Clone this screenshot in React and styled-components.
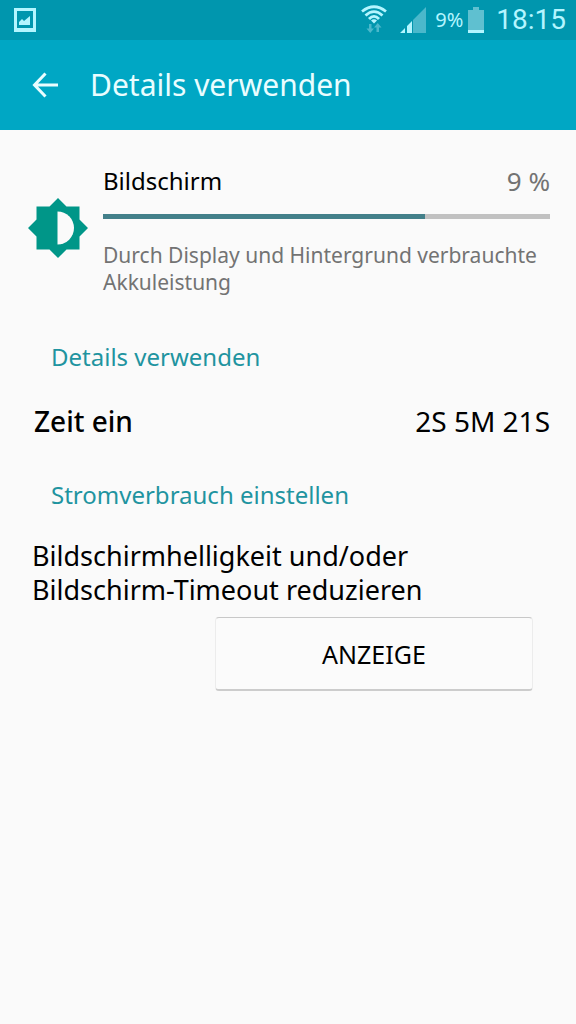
import React from 'react';
import styled, { createGlobalStyle } from 'styled-components';

const GlobalStyle = createGlobalStyle`
  * {
    box-sizing: border-box;
  }

  body {
    margin: 0;
    background-color: #fafafa;
    color: #000000;
    font-family: 'Noto Sans', 'Open Sans', sans-serif;
  }
`;

// Styled component for the system status bar
const StatusBar = styled.div`
  display: flex;
  align-items: center;
  justify-content: space-between;
  height: 40px;
  padding: 0 10px 0 14px;
  background-color: #0096ae;
  color: #b4f5ff;
`;

const StatusGroup = styled.div`
  display: flex;
  align-items: center;
`;

// Keeps the signal bars clear of the wifi icon
const SignalSlot = styled.span`
  display: flex;
  margin-left: 13px;
`;

const BatteryLevel = styled.span`
  margin: 0 5px 0 9px;
  font-size: 20px;
  line-height: 40px;
`;

const Clock = styled.time`
  margin-left: 12px;
  font-family: Roboto, sans-serif;
  font-size: 28px;
  line-height: 40px;
`;

// Styled component for the action bar
const ActionBar = styled.header`
  display: flex;
  align-items: center;
  gap: 20px;
  height: 90px;
  padding: 0 20px;
  background-color: #00a7c4;
  color: #e9fdff;
`;

const BackButton = styled.button`
  display: flex;
  align-items: center;
  justify-content: center;
  width: 50px;
  height: 50px;
  padding: 0;
  border: 0;
  background: none;
  color: inherit;
`;

const Title = styled.h1`
  margin: 0;
  font-size: 30px;
  font-weight: 400;
  line-height: 40px;
`;

const Content = styled.main`
  padding: 34px 26px 0 28px;
`;

// Styled component for the battery usage entry
const Usage = styled.section`
  display: flex;
  gap: 15px;
`;

const UsageIcon = styled.svg`
  flex: none;
  margin-top: 34px;
`;

const UsageBody = styled.div`
  flex: 1;
`;

const UsageHead = styled.div`
  display: flex;
  justify-content: space-between;
  font-size: 24px;
  line-height: 34px;
`;

const UsageName = styled.label``;

const UsagePercent = styled.span`
  color: #737373;
  font-size: 26px;
`;

const UsageBar = styled.progress`
  display: block;
  width: 100%;
  height: 5px;
  margin-top: 16px;
  border: 0;
  appearance: none;

  &::-webkit-progress-bar {
    background-color: #c1c1c1;
  }

  &::-webkit-progress-value {
    background-color: #43808a;
  }
`;

const UsageText = styled.p`
  margin: 23px 0 0;
  color: #737373;
  font-size: 21px;
  line-height: 27px;
`;

const SectionTitle = styled.h2`
  margin: 0;
  padding: 44px 0 0 23px;
  color: #1f94a0;
  font-size: 24px;
  font-weight: 400;
  line-height: 34px;
`;

const DetailRow = styled.dl`
  display: flex;
  justify-content: space-between;
  margin: 30px 0 -4px;
  padding-left: 6px;
  font-size: 28px;
  line-height: 34px;
`;

const DetailLabel = styled.dt`
  font-weight: 500;
`;

const DetailValue = styled.dd`
  margin: 0;
`;

const Advice = styled.p`
  margin: 27px 0 10px;
  padding-left: 4px;
  font-size: 27px;
  line-height: 34px;
`;

const Actions = styled.div`
  display: flex;
  justify-content: flex-end;
  padding-right: 17px;
`;

const ActionButton = styled.button`
  width: 63%;
  height: 74px;
  border: 1px solid #ececec;
  border-top-color: #c8c8c8;
  border-bottom: 2px solid #cccccc;
  border-radius: 4px;
  background-color: #fbfbfb;
  color: #000000;
  font-family: inherit;
  font-size: 25px;
`;

const PictureIcon = () => (
  <svg width="22" height="24" viewBox="0 0 22 24" aria-hidden="true">
    <path fill="currentColor" fillRule="evenodd" d="M0 0h22v24H0zM3 3v17h16V3z" />
    <path fill="currentColor" d="M5 17v-3l3-3 2 2 6-5v9z" />
  </svg>
);

const WifiIcon = () => (
  <svg width="26" height="30" viewBox="0 0 26 30" aria-hidden="true">
    <g fill="none" stroke="currentColor" strokeWidth="2.800">
      <path d="M1 6.500Q13-3 25 6.500" />
      <path d="M4.500 10.500Q13 2.800 21.500 10.500" />
      <path d="M8 14Q13 8.800 18 14" />
    </g>
    <path fill="currentColor" d="M10 15.500q3-2.500 6 0L13 18.500z" />
    <path
      fill="#4bb8cb"
      d="M8 19h2.500v4.500H13L9.250 28 5.500 23.500H8zM15.500 27v-4.500H13L16.750 18l3.750 4.500H18V27z"
    />
  </svg>
);

const SignalIcon = () => (
  <svg width="26" height="26" viewBox="0 0 26 26" aria-hidden="true">
    <path fill="#4bb8cb" d="M13 13L26 0v26H13z" />
    <path fill="currentColor" d="M0 26l5-5v5zM7 19l5-5v12H7z" />
  </svg>
);

const BatteryIcon = () => (
  <svg width="16" height="26" viewBox="0 0 16 26" aria-hidden="true">
    <path fill="#5fc0d0" d="M5 0h6v3h5v20H0V3h5z" />
    <path fill="currentColor" d="M0 23h16v3H0z" />
  </svg>
);

const BackIcon = () => (
  <svg width="26" height="26" viewBox="0 0 26 26" aria-hidden="true">
    <path
      fill="none"
      stroke="currentColor"
      strokeWidth="3"
      d="M13.500 1.500L2.500 13l11 11.500M2.500 13H26"
    />
  </svg>
);

const App = () => {
  return (
    <>
      <GlobalStyle />
      <StatusBar>
        <PictureIcon />
        <StatusGroup>
          <WifiIcon />
          <SignalSlot>
            <SignalIcon />
          </SignalSlot>
          <BatteryLevel>9%</BatteryLevel>
          <BatteryIcon />
          <Clock>18:15</Clock>
        </StatusGroup>
      </StatusBar>
      <ActionBar>
        <BackButton type="button" aria-label="Zurück">
          <BackIcon />
        </BackButton>
        <Title>Details verwenden</Title>
      </ActionBar>
      <Content>
        <Usage>
          <UsageIcon width="60" height="60" viewBox="0 0 60 60" aria-hidden="true">
            <path
              fill="#009688"
              d="M30 0l8.500 8.500H51.500V21.500L60 30l-8.500 8.500V51.500H38.500L30 60l-8.500-8.500H8.500V38.500L0 30l8.500-8.500V8.500H21.500z"
            />
            <path fill="#fafafa" d="M29.500 13.500a16.500 16.500 0 0 1 0 33z" />
          </UsageIcon>
          <UsageBody>
            <UsageHead>
              <UsageName htmlFor="usage">Bildschirm</UsageName>
              <UsagePercent>9 %</UsagePercent>
            </UsageHead>
            <UsageBar id="usage" value="72" max="100" />
            <UsageText>
              Durch Display und Hintergrund verbrauchte Akkuleistung
            </UsageText>
          </UsageBody>
        </Usage>
        <SectionTitle>Details verwenden</SectionTitle>
        <DetailRow>
          <DetailLabel>Zeit ein</DetailLabel>
          <DetailValue>2S 5M 21S</DetailValue>
        </DetailRow>
        <SectionTitle>Stromverbrauch einstellen</SectionTitle>
        <Advice>
          Bildschirmhelligkeit und/oder
          <br />
          Bildschirm-Timeout reduzieren
        </Advice>
        <Actions>
          <ActionButton type="button">ANZEIGE</ActionButton>
        </Actions>
      </Content>
    </>
  );
};

export default App;
